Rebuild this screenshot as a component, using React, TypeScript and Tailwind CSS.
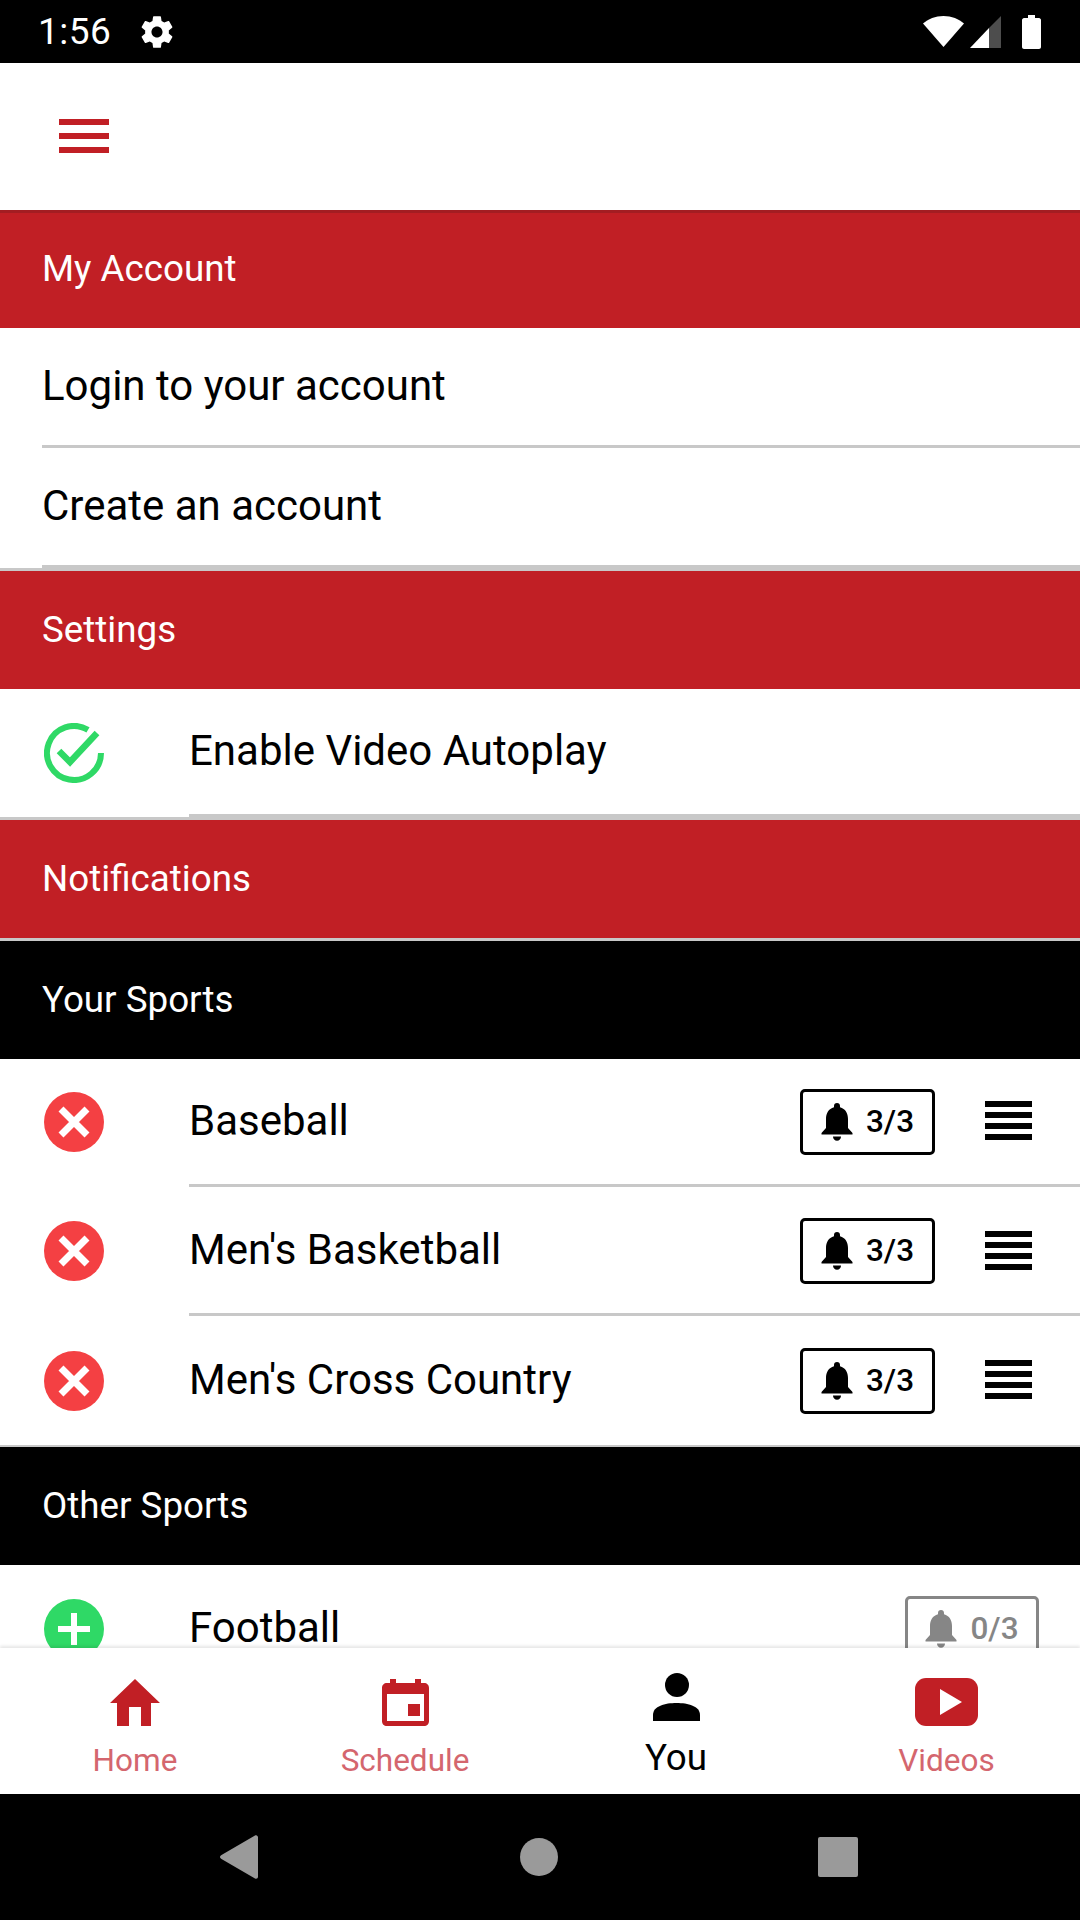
const RED = "#c11f25"

function SectionHeader({ title, dark = false }: { title: string; dark?: boolean }) {
  return (
    <div
      className={`flex h-[118px] items-center px-[42px] text-[36.75px] text-white ${
        dark ? "bg-black" : "bg-[#c11f25]"
      }`}
    >
      {title}
    </div>
  )
}

function Bell({ color }: { color: string }) {
  return (
    <svg width="32" height="38" viewBox="0 0 32 38" fill={color}>
      <path d="M16 0c-1.9 0-3 1.3-3 3v1.2C7.6 5.6 5 10.4 5 16v9l-4.5 5v1.5h31V30L27 25v-9c0-5.600-2.600-10.400-8-11.800V3c0-1.700-1.100-3-3-3z" />
      <path d="M12 33.500h8c0 2.400-1.800 4.300-4 4.300s-4-1.900-4-4.300z" />
    </svg>
  )
}

function Badge({ count, muted = false }: { count: string; muted?: boolean }) {
  return (
    <div
      className={`flex h-[66px] shrink-0 items-center justify-center gap-[13px] rounded-[5px] border-[3px] bg-white text-[31.5px] font-medium leading-none ${
        muted
          ? "w-[134px] border-[#868686] text-[#868686]"
          : "w-[135px] border-black text-black"
      }`}
    >
      <Bell color={muted ? "#868686" : "#000000"} />
      <span>{count}</span>
    </div>
  )
}

function DragHandle() {
  return (
    <div className="mb-[2px] ml-[50px] flex w-[47px] shrink-0 flex-col gap-[5px]">
      <div className="h-[6px] bg-black" />
      <div className="h-[6px] bg-black" />
      <div className="h-[6px] bg-black" />
      <div className="h-[6px] bg-black" />
    </div>
  )
}

function RemoveIcon() {
  return (
    <svg width="60" height="60" viewBox="0 0 60 60" className="shrink-0">
      <circle cx="30" cy="30" r="30" fill="#f44043" />
      <path d="M17 17l26 26M43 17L17 43" stroke="#fff" strokeWidth="7" />
    </svg>
  )
}

function AddIcon() {
  return (
    <svg width="60" height="60" viewBox="0 0 60 60" className="shrink-0">
      <circle cx="30" cy="30" r="30" fill="#2fd966" />
      <path d="M30 14v32M14 30h32" stroke="#fff" strokeWidth="6" />
    </svg>
  )
}

function CheckIcon() {
  return (
    <svg width="60" height="60" viewBox="0 0 60 60" fill="none" className="mt-[3px] shrink-0">
      <path d="M57 30a27 27 0 1 1-13-23.100" stroke="#2fd966" strokeWidth="6" />
      <path d="M15 28l11 11 27-29" stroke="#2fd966" strokeWidth="6.500" />
    </svg>
  )
}

function SportRow({ name, height, line = true }: { name: string; height: string; line?: boolean }) {
  return (
    <div>
      <div className={`flex items-center pl-[44px] pr-[48px] ${height}`}>
        <RemoveIcon />
        <span className="mb-[2px] ml-[85px] flex-1 text-[42px] leading-none text-black">{name}</span>
        <Badge count="3/3" />
        <DragHandle />
      </div>
      {line && <div className="ml-[189px] h-[3px] bg-[#c8c8c8]" />}
    </div>
  )
}

function NavItem({
  label,
  active = false,
  className = "",
  children,
}: {
  label: string
  active?: boolean
  className?: string
  children: React.ReactNode
}) {
  return (
    <div className={`flex w-[270px] flex-col items-center ${className}`}>
      <div className="flex h-[78px] items-end justify-center">{children}</div>
      <span
        className={
          active
            ? "mt-[10px] text-[36.75px] leading-[44px] text-black"
            : "mt-[14px] text-[31.5px] leading-[42px] text-[#d4666e]"
        }
      >
        {label}
      </span>
    </div>
  )
}

export default function App() {
  return (
    <div className="flex h-[1920px] w-[1080px] flex-col overflow-hidden bg-white font-['Roboto',sans-serif]">
      {/* status bar */}
      <div className="flex h-[63px] shrink-0 items-center bg-black pl-[38px] pr-[39px] text-white">
        <span className="text-[37px] leading-none tracking-[0.5px]">1:56</span>
        <svg width="38" height="38" viewBox="0 0 24 24" fill="#fff" className="ml-[27px]">
          <path d="M19.430 12.980c.04-.32.07-.64.07-.98s-.03-.66-.07-.98l2.110-1.650c.19-.15.24-.42.12-.64l-2-3.460c-.12-.22-.39-.3-.61-.22l-2.490 1c-.52-.4-1.080-.73-1.690-.98l-.38-2.650C14.460 2.180 14.250 2 14 2h-4c-.25 0-.46.18-.49.42l-.38 2.650c-.61.25-1.170.59-1.690.98l-2.490-1c-.23-.09-.49 0-.61.22l-2 3.460c-.13.22-.07.49.12.64l2.110 1.650c-.04.32-.07.65-.07.98s.03.66.07.98l-2.110 1.650c-.19.15-.24.42-.12.64l2 3.460c.12.22.39.3.61.22l2.490-1c.52.4 1.080.73 1.690.98l.38 2.650c.03.24.24.42.49.42h4c.25 0 .46-.18.49-.42l.38-2.650c.61-.25 1.170-.59 1.690-.98l2.490 1c.23.09.49 0 .61-.22l2-3.460c.12-.22.07-.49-.12-.64l-2.110-1.650zM12 15.500c-1.930 0-3.500-1.570-3.500-3.500s1.570-3.500 3.500-3.500 3.500 1.570 3.500 3.500-1.570 3.500-3.500 3.500z" />
        </svg>
        <div className="flex-1" />
        <svg width="41" height="31" viewBox="0 0 41 31" fill="#fff">
          <path d="M20.500 31L0 7.500C5 3 12.500 0 20.500 0S36 3 41 7.500z" />
        </svg>
        <svg width="32" height="32" viewBox="0 0 32 32" className="ml-[6px]">
          <path d="M0 32L19 12v20z" fill="#fff" />
          <path d="M19 12L31 0v32H19z" fill="#4d4d4d" />
        </svg>
        <svg width="19" height="34" viewBox="0 0 19 34" fill="#fff" className="ml-[20px]">
          <path d="M6 0h7v3h4c1 0 2 1 2 2v27c0 1-1 2-2 2H2c-1 0-2-1-2-2V5c0-1 1-2 2-2h4z" />
        </svg>
      </div>

      {/* top bar */}
      <div className="flex h-[147px] shrink-0 items-center pl-[59px]">
        <div className="mb-[2px] flex w-[50px] flex-col gap-[8px]">
          <div className="h-[6px] bg-[#c11f25]" />
          <div className="h-[6px] bg-[#c11f25]" />
          <div className="h-[6px] bg-[#c11f25]" />
        </div>
      </div>

      {/* scrolling list */}
      <div className="min-h-0 flex-1 overflow-hidden">
        <div className="relative">
          <div className="absolute inset-x-0 top-0 h-[3px] bg-[#a31d22]" />
          <SectionHeader title="My Account" />
        </div>
        <div className="flex h-[117px] items-center px-[42px] pb-[2px] text-[42px] text-black">Login to your account</div>
        <div className="ml-[42px] h-[3px] bg-[#c8c8c8]" />
        <div className="flex h-[117px] items-center px-[42px] pb-[2px] text-[42px] text-black">Create an account</div>
        <div className="ml-[42px] h-[3px] bg-[#c8c8c8]" />
        <div className="h-[3px] bg-[#c8c8c8]" />

        <SectionHeader title="Settings" />
        <div className="flex h-[125px] items-center pl-[44px]">
          <CheckIcon />
          <span className="mb-[2px] ml-[85px] text-[42px] text-black">Enable Video Autoplay</span>
        </div>
        <div className="ml-[189px] h-[3px] bg-[#c8c8c8]" />
        <div className="h-[3px] bg-[#c8c8c8]" />

        <SectionHeader title="Notifications" />
        <div className="h-[3px] bg-[#c8c8c8]" />
        <SectionHeader title="Your Sports" dark />
        <SportRow name="Baseball" height="h-[125px]" />
        <SportRow name="Men's Basketball" height="h-[126px] pt-[2px]" />
        <SportRow name="Men's Cross Country" height="h-[129px]" line={false} />
        <div className="h-[2px] bg-[#c8c8c8]" />
        <SectionHeader title="Other Sports" dark />
        <div className="flex h-[126px] items-center pl-[44px] pr-[41px] pt-[2px]">
          <AddIcon />
          <span className="mb-[2px] ml-[85px] flex-1 text-[42px] leading-none text-black">Football</span>
          <Badge count="0/3" muted />
        </div>
      </div>

      {/* bottom tabs */}
      <div className="relative z-10 flex h-[146px] shrink-0 bg-white shadow-[0_-2px_3px_rgba(0,0,0,0.1)]">
        <NavItem label="Home">
          <svg width="50" height="47" viewBox="0 0 50 47" fill={RED}>
            <path d="M25 0L50 24H41V47H31V28H19V47H7V24H0z" />
          </svg>
        </NavItem>
        <NavItem label="Schedule">
          <svg width="47" height="47" viewBox="0 0 47 47" fill={RED}>
            <path
              fillRule="evenodd"
              d="M8 0h6v4h19V0h6v4h3c3 0 5 2 5 5v33c0 3-2 5-5 5H5c-3 0-5-2-5-5V9c0-3 2-5 5-5h3zM5 15v27h37V15z"
            />
            <path d="M26 25h12v12H26z" />
          </svg>
        </NavItem>
        <NavItem label="You" active className="pl-[2px]">
          <svg width="47" height="48" viewBox="0 0 47 48" fill="#000" className="mb-[5px]">
            <circle cx="24" cy="12" r="12" />
            <path d="M0 48v-6c0-9 12-12 23.500-12S47 33 47 42v6z" />
          </svg>
        </NavItem>
        <NavItem label="Videos" className="pl-[3px]">
          <svg width="63" height="48" viewBox="0 0 63 48">
            <rect width="63" height="48" rx="11" fill={RED} />
            <path d="M25 11l22 13-22 13z" fill="#fff" />
          </svg>
        </NavItem>
      </div>

      {/* android nav */}
      <div className="flex h-[126px] shrink-0 items-center justify-center bg-black">
        <svg width="38" height="44" viewBox="0 0 38 44" fill="#9a9a9a" className="-ml-[2px]">
          <path d="M35 .500c1.500-.8 3 .2 3 2V41.500c0 1.800-1.500 2.800-3 2L1.500 24c-2-1-2-3 0-4z" />
        </svg>
        <div className="ml-[262px] h-[38px] w-[38px] rounded-full bg-[#9a9a9a]" />
        <div className="ml-[260px] h-[40px] w-[40px] rounded-[2px] bg-[#9a9a9a]" />
      </div>
    </div>
  )
}
